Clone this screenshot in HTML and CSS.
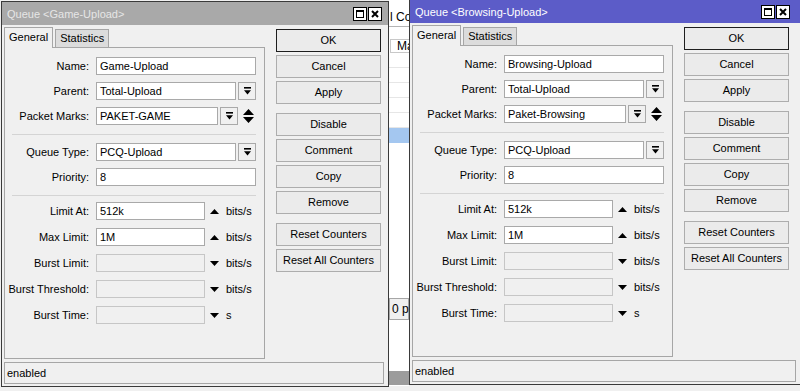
FILE: index.html
```html
<!DOCTYPE html>
<html lang="en">
<head>
    <meta charset="UTF-8">
    <meta name="viewport" content="width=device-width, initial-scale=1.0">
    <title>Queue</title>
    <link rel="stylesheet" href="styles.css">
</head>
<body>
<div class="desktop">

    <!-- Game-Upload (inactive) -->
    <div class="window inactive">
        <div class="titlebar">
            <span class="title">Queue &lt;Game-Upload&gt;</span>
            <div class="title-btns">
                <span class="tbtn"><svg width="8" height="8" viewBox="0 0 8 8"><rect x="0.5" y="0.5" width="7" height="7" fill="none" stroke="#000"/><rect x="0" y="0" width="8" height="2" fill="#000"/></svg></span>
                <span class="tbtn"><svg width="8" height="8" viewBox="0 0 8 8"><path d="M1 1L7 7M7 1L1 7" stroke="#000" stroke-width="2"/></svg></span>
            </div>
        </div>
        <div class="wbody">
            <div class="main">
                <div class="tabs">
                    <span class="tab active">General</span>
                    <span class="tab">Statistics</span>
                </div>
                <div class="panel">
                    <div class="row"><label>Name:</label><div class="field full">Game-Upload</div></div>
                    <div class="row"><label>Parent:</label><div class="field mid">Total-Upload</div><span class="dd"><svg width="7" height="8" viewBox="0 0 7 8"><rect width="7" height="1.6"/><path d="M0 3.2h7L3.5 7.5z"/></svg></span></div>
                    <div class="row"><label>Packet Marks:</label><div class="field short">PAKET-GAME</div><span class="dd"><svg width="7" height="8" viewBox="0 0 7 8"><rect width="7" height="1.6"/><path d="M0 3.2h7L3.5 7.5z"/></svg></span><span class="updown"><svg width="11" height="14" viewBox="0 0 11 14"><path d="M5.5 0L11 6H0z M0 8h11L5.5 14z"/></svg></span></div>
                    <div class="sep"></div>
                    <div class="row"><label>Queue Type:</label><div class="field mid">PCQ-Upload</div><span class="dd"><svg width="7" height="8" viewBox="0 0 7 8"><rect width="7" height="1.6"/><path d="M0 3.2h7L3.5 7.5z"/></svg></span></div>
                    <div class="row"><label>Priority:</label><div class="field full">8</div></div>
                    <div class="sep sep2"></div>
                    <div class="row lower"><label>Limit At:</label><div class="field rate">512k</div><span class="arr"><svg width="9" height="5" viewBox="0 0 9 5"><path d="M4.5 0L9 5H0z"/></svg></span><span class="unit">bits/s</span></div>
                    <div class="row lower"><label>Max Limit:</label><div class="field rate">1M</div><span class="arr"><svg width="9" height="5" viewBox="0 0 9 5"><path d="M4.5 0L9 5H0z"/></svg></span><span class="unit">bits/s</span></div>
                    <div class="row lower"><label>Burst Limit:</label><div class="field rate off"></div><span class="arr"><svg width="9" height="5" viewBox="0 0 9 5"><path d="M0 0h9L4.5 5z"/></svg></span><span class="unit">bits/s</span></div>
                    <div class="row lower"><label>Burst Threshold:</label><div class="field rate off"></div><span class="arr"><svg width="9" height="5" viewBox="0 0 9 5"><path d="M0 0h9L4.5 5z"/></svg></span><span class="unit">bits/s</span></div>
                    <div class="row lower"><label>Burst Time:</label><div class="field rate off"></div><span class="arr"><svg width="9" height="5" viewBox="0 0 9 5"><path d="M0 0h9L4.5 5z"/></svg></span><span class="unit">s</span></div>
                </div>
            </div>
            <div class="buttons">
                <span class="btn ok">OK</span>
                <span class="btn">Cancel</span>
                <span class="btn">Apply</span>
                <span class="btn group">Disable</span>
                <span class="btn">Comment</span>
                <span class="btn">Copy</span>
                <span class="btn">Remove</span>
                <span class="btn group">Reset Counters</span>
                <span class="btn">Reset All Counters</span>
            </div>
        </div>
        <div class="statusbar">enabled</div>
    </div>

    <!-- list window behind the dialogs -->
    <div class="behind">
        <div class="b-tool">l Co</div>
        <div class="b-head">Ma</div>
        <div class="b-row"></div>
        <div class="b-row"></div>
        <div class="b-row"></div>
        <div class="b-row"></div>
        <div class="b-row"></div>
        <div class="b-row selected"></div>
        <div class="b-fill"></div>
        <div class="b-count">0 pa</div>
        <div class="b-fill2"></div>
        <div class="b-grey"></div>
    </div>

    <!-- Browsing-Upload (active) -->
    <div class="window active">
        <div class="titlebar">
            <span class="title">Queue &lt;Browsing-Upload&gt;</span>
            <div class="title-btns">
                <span class="tbtn"><svg width="8" height="8" viewBox="0 0 8 8"><rect x="0.5" y="0.5" width="7" height="7" fill="none" stroke="#000"/><rect x="0" y="0" width="8" height="2" fill="#000"/></svg></span>
                <span class="tbtn"><svg width="8" height="8" viewBox="0 0 8 8"><path d="M1 1L7 7M7 1L1 7" stroke="#000" stroke-width="2"/></svg></span>
            </div>
        </div>
        <div class="wbody">
            <div class="main">
                <div class="tabs">
                    <span class="tab active">General</span>
                    <span class="tab">Statistics</span>
                </div>
                <div class="panel">
                    <div class="row"><label>Name:</label><div class="field full">Browsing-Upload</div></div>
                    <div class="row"><label>Parent:</label><div class="field mid">Total-Upload</div><span class="dd"><svg width="7" height="8" viewBox="0 0 7 8"><rect width="7" height="1.6"/><path d="M0 3.2h7L3.5 7.5z"/></svg></span></div>
                    <div class="row"><label>Packet Marks:</label><div class="field short">Paket-Browsing</div><span class="dd"><svg width="7" height="8" viewBox="0 0 7 8"><rect width="7" height="1.6"/><path d="M0 3.2h7L3.5 7.5z"/></svg></span><span class="updown"><svg width="11" height="14" viewBox="0 0 11 14"><path d="M5.5 0L11 6H0z M0 8h11L5.5 14z"/></svg></span></div>
                    <div class="sep"></div>
                    <div class="row"><label>Queue Type:</label><div class="field mid">PCQ-Upload</div><span class="dd"><svg width="7" height="8" viewBox="0 0 7 8"><rect width="7" height="1.6"/><path d="M0 3.2h7L3.5 7.5z"/></svg></span></div>
                    <div class="row"><label>Priority:</label><div class="field full">8</div></div>
                    <div class="sep sep2"></div>
                    <div class="row lower"><label>Limit At:</label><div class="field rate">512k</div><span class="arr"><svg width="9" height="5" viewBox="0 0 9 5"><path d="M4.5 0L9 5H0z"/></svg></span><span class="unit">bits/s</span></div>
                    <div class="row lower"><label>Max Limit:</label><div class="field rate">1M</div><span class="arr"><svg width="9" height="5" viewBox="0 0 9 5"><path d="M4.5 0L9 5H0z"/></svg></span><span class="unit">bits/s</span></div>
                    <div class="row lower"><label>Burst Limit:</label><div class="field rate off"></div><span class="arr"><svg width="9" height="5" viewBox="0 0 9 5"><path d="M0 0h9L4.5 5z"/></svg></span><span class="unit">bits/s</span></div>
                    <div class="row lower"><label>Burst Threshold:</label><div class="field rate off"></div><span class="arr"><svg width="9" height="5" viewBox="0 0 9 5"><path d="M0 0h9L4.5 5z"/></svg></span><span class="unit">bits/s</span></div>
                    <div class="row lower"><label>Burst Time:</label><div class="field rate off"></div><span class="arr"><svg width="9" height="5" viewBox="0 0 9 5"><path d="M0 0h9L4.5 5z"/></svg></span><span class="unit">s</span></div>
                </div>
            </div>
            <div class="buttons">
                <span class="btn ok">OK</span>
                <span class="btn">Cancel</span>
                <span class="btn">Apply</span>
                <span class="btn group">Disable</span>
                <span class="btn">Comment</span>
                <span class="btn">Copy</span>
                <span class="btn">Remove</span>
                <span class="btn group">Reset Counters</span>
                <span class="btn">Reset All Counters</span>
            </div>
        </div>
        <div class="statusbar">enabled</div>
    </div>

</div>
</body>
</html>
```

FILE: styles.css
```css
/* Base */
* {
    margin: 0;
    padding: 0;
    box-sizing: border-box;
}

body {
    width: 800px;
    height: 391px;
    overflow: hidden;
    background: #f0f0f0;
    font-family: "Liberation Sans", Arial, sans-serif;
    font-size: 11px;
    color: #000;
}

.desktop {
    display: flex;
    align-items: flex-start;
    width: 800px;
    height: 391px;
    overflow: hidden;
}

/* Dialog window */
.window {
    flex-shrink: 0;
    width: 388px;
    background: #f0f0f0;
    border: 1px solid #3a3a3a;
}

.window.inactive {
    margin: 1px 0 0 1px;
}

.window.active {
    width: 392px;
    margin-top: -1px;
}

.titlebar {
    height: 23px;
    display: flex;
    align-items: center;
    justify-content: space-between;
    padding: 0 6px 0 5px;
}

.inactive .titlebar {
    background: #a9a9a9;
    color: #e6e6e6;
}

.active .titlebar {
    background: #5c5cc8;
    color: #fff;
    padding-right: 10px;
}

.title-btns {
    display: flex;
    gap: 1px;
}

.tbtn {
    width: 14px;
    height: 14px;
    background: #fff;
    border: 1px solid #000;
    display: flex;
    align-items: center;
    justify-content: center;
}

.wbody {
    display: flex;
    padding-left: 2px;
}

.main {
    width: 261px;
    margin-top: 2px;
}

/* Tabs */
.tabs {
    display: flex;
    align-items: flex-end;
    height: 20px;
    gap: 2px;
}

.tab {
    height: 18px;
    line-height: 17px;
    padding: 0 4px;
    background: #dcdcdc;
    border: 1px solid #a6a6a6;
    border-bottom: none;
}

.tab.active {
    height: 21px;
    line-height: 19px;
    padding: 0 4px;
    background: #f0f0f0;
    margin-bottom: -1px;
    position: relative;
}

/* Form panel */
.panel {
    height: 312px;
    border: 1px solid #a6a6a6;
    padding-top: 9px;
    display: flex;
    flex-direction: column;
}

.row {
    display: flex;
    align-items: center;
    flex-shrink: 0;
    height: 18px;
    margin-bottom: 7px;
}

.row.lower {
    margin-bottom: 8px;
}

.row label {
    width: 91px;
    padding-right: 7px;
    text-align: right;
    white-space: nowrap;
}

.field {
    height: 18px;
    line-height: 16px;
    padding-left: 3px;
    background: #fff;
    border: 1px solid #a9a9a9;
    white-space: nowrap;
    overflow: hidden;
}

.field.full { width: 160px; }
.field.mid { width: 140px; }
.field.short { width: 122px; }
.field.rate { width: 109px; }

.field.off {
    background: #f0f0f0;
    border-color: #c6c6c6;
}

.dd {
    width: 18px;
    height: 18px;
    margin-left: 2px;
    background: #f0f0f0;
    border: 1px solid #a9a9a9;
    display: flex;
    align-items: center;
    justify-content: center;
}

.updown {
    margin-left: 5px;
    display: flex;
}

.arr {
    margin-left: 5px;
    display: flex;
}

.unit {
    margin-left: 7px;
}

.sep {
    flex-shrink: 0;
    height: 1px;
    background: #d4d4d4;
    margin: 2px 8px 8px 7px;
}

.sep2 {
    margin-bottom: 6px;
}

/* Button column */
.buttons {
    width: 105px;
    margin: 4px 0 0 11px;
    display: flex;
    flex-direction: column;
}

.btn {
    height: 23px;
    line-height: 21px;
    margin-bottom: 3px;
    text-align: center;
    background: #ebebeb;
    border: 1px solid #adadad;
    white-space: nowrap;
}

.btn.ok {
    border-color: #1e1e1e;
}

.btn.group {
    margin-top: 6px;
}

.statusbar {
    height: 22px;
    line-height: 20px;
    margin: 3px 4px 2px 2px;
    padding-left: 2px;
    border: 1px solid #a6a6a6;
}

/* List window peeking out between the dialogs */
.behind {
    flex-shrink: 0;
    width: 20px;
    height: 386px;
    background: #fff;
    display: flex;
    flex-direction: column;
    overflow: hidden;
    white-space: nowrap;
}

.b-tool {
    flex-shrink: 0;
    height: 27px;
    padding: 10px 0 0 1px;
    font-size: 12px;
    border-bottom: 1px solid #b4b4b4;
}

.b-head {
    flex-shrink: 0;
    height: 14px;
    margin: 12px 0 0 1px;
    padding-left: 6px;
    line-height: 13px;
    font-size: 12px;
    border-top: 1px solid #c8c8c8;
    border-bottom: 1px solid #c8c8c8;
    border-left: 1px solid #c8c8c8;
}

.b-row {
    flex-shrink: 0;
    height: 15px;
    border-bottom: 1px solid #e6e6e6;
}

.b-row.selected {
    background: #a4c7f0;
    border-bottom: none;
}

.b-fill {
    flex-shrink: 0;
    height: 155px;
}

.b-count {
    flex-shrink: 0;
    height: 22px;
    line-height: 20px;
    padding-left: 2px;
    font-size: 12px;
    background: #f0f0f0;
    border: 1px solid #a6a6a6;
}

.b-fill2 {
    flex-shrink: 0;
    height: 51px;
}

.b-grey {
    flex-shrink: 0;
    height: 14px;
    background: #9c9c9c;
}
```
